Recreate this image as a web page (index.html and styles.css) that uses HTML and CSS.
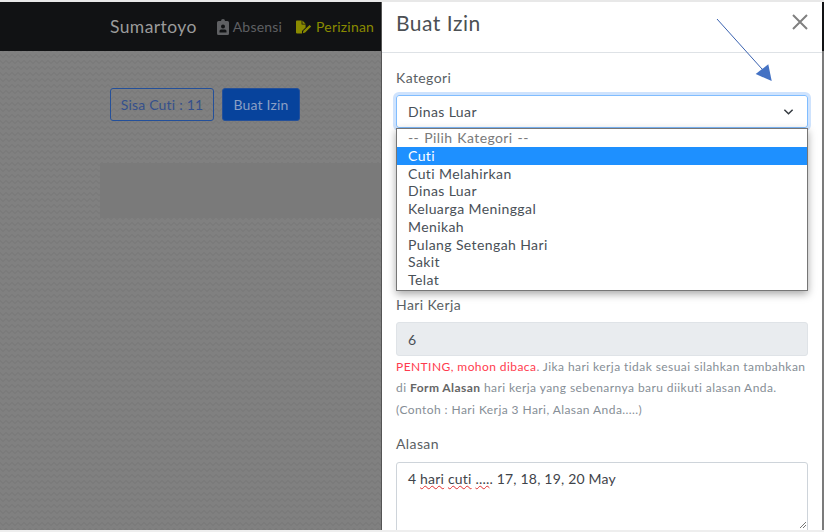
FILE: index.html
```html
<!DOCTYPE html>
<html>
<head>
  <meta charset="UTF-8">
  <title>Buat Izin</title>
  <link rel="stylesheet" href="styles.css">
</head>
<body>
  <div class="page">
    <nav class="navbar">
      <span class="brand">Sumartoyo</span>
      <span class="nav-link">
        <svg class="nav-icon" viewBox="0 0 12 16"><path fill="#5f6063" d="M1.500 2H4a2 2 0 0 1 4 0h2.500A1.500 1.500 0 0 1 12 3.500V14.500A1.500 1.500 0 0 1 10.500 16H1.500A1.500 1.500 0 0 1 0 14.500V3.500A1.500 1.500 0 0 1 1.500 2ZM6 5.500A2 2 0 1 0 6 9.500A2 2 0 1 0 6 5.500ZM2.500 13.500H9.500V12A1.500 1.500 0 0 0 8 10.500H4A1.500 1.500 0 0 0 2.500 12Z"/></svg>
        Absensi
      </span>
      <span class="nav-link active">
        <svg class="nav-icon wide" viewBox="0 0 20 16"><path fill="#8a8a00" d="M0 1A1 1 0 0 1 1 0H7V4.500A.5.5 0 0 0 7.500 5H12V8.500L7.500 13V16H1A1 1 0 0 1 0 15ZM8 0 12 4H8ZM17 5.500 19 7.500 11.500 15 8.500 15.800 9.300 12.800Z"/></svg>
        Perizinan
      </span>
    </nav>
    <div class="content">
      <div class="actions">
        <span class="btn btn-outline">Sisa Cuti : 11</span>
        <span class="btn btn-solid">Buat Izin</span>
      </div>
      <div class="empty-card"></div>
    </div>
  </div>

  <aside class="modal">
    <header class="modal-header">
      <h5>Buat Izin</h5>
      <svg class="close" viewBox="0 0 16 16"><path d="M1 1 15 15M15 1 1 15"/></svg>
    </header>
    <form class="modal-body">
      <label class="field-label">Kategori</label>
      <div class="select">
        <span>Dinas Luar</span>
        <svg class="chevron" viewBox="0 0 12 8"><path d="M1.500 1.500 6 6 10.500 1.500"/></svg>
      </div>
      <label class="field-label kerja">Hari Kerja</label>
      <div class="input-disabled">6</div>
      <p class="help">
        <span class="warn">PENTING, mohon dibaca</span>. Jika hari kerja tidak sesuai silahkan tambahkan<br>
        di <b>Form Alasan</b> hari kerja yang sebenarnya baru diikuti alasan Anda.<br>
        (Contoh : Hari Kerja 3 Hari, Alasan Anda.....)
      </p>
      <label class="field-label alasan">Alasan</label>
      <div class="textarea">
        4 <u>hari</u> <u>cuti</u> <u>....</u>. 17, 18, 19, 20 May
        <svg class="grip" viewBox="0 0 6 6"><path d="M0 6 6 0M3 6 6 3"/></svg>
      </div>

      <ul class="options">
        <li class="placeholder">-- Pilih Kategori --</li>
        <li class="selected">Cuti</li>
        <li>Cuti Melahirkan</li>
        <li>Dinas Luar</li>
        <li>Keluarga Meninggal</li>
        <li>Menikah</li>
        <li>Pulang Setengah Hari</li>
        <li>Sakit</li>
        <li>Telat</li>
      </ul>
    </form>
  </aside>
  <div class="edge"></div>

  <svg class="arrow" viewBox="0 0 70 80">
    <path class="arrow-line" d="M1 1 46 51"/>
    <path class="arrow-head" d="M39.700 56 55.700 63 52.300 46.300Z"/>
  </svg>
</body>
</html>
```

FILE: styles.css
```css
* {
  box-sizing: border-box;
}
html, body {
  height: 100%;
}
body {
  margin: 0;
  overflow: hidden;
  font-family: "Lato", sans-serif;
  font-size: 14px;
  letter-spacing: .4px;
  color: #495057;
  background: #eee;
  display: flex;
  border-top: 2px solid #e8e8e8;
  border-bottom: 2px solid #eee;
  position: relative;
}
.page {
  width: 381px;
  flex: none;
  overflow: hidden;
  background:
    linear-gradient(135deg, #7b7b7b 25%, transparent 25%) -3px 0 / 6px 6px,
    linear-gradient(225deg, #7b7b7b 25%, transparent 25%) -3px 0 / 6px 6px,
    linear-gradient(315deg, #7b7b7b 25%, transparent 25%) 0 0 / 6px 6px,
    linear-gradient(45deg, #7b7b7b 25%, transparent 25%) 0 0 / 6px 6px,
    #808080;
}
.navbar {
  height: 49px;
  background: #111214;
  display: flex;
  align-items: center;
  padding-left: 110px;
  white-space: nowrap;
}
.brand {
  font-size: 17.500px;
  color: #9b9b9b;
  margin-right: 20px;
}
.nav-link {
  color: #5f6063;
  letter-spacing: .2px;
  display: flex;
  align-items: center;
  gap: 4px;
  margin-right: 14px;
}
.nav-link.active {
  color: #8a8a00;
}
.nav-icon {
  width: 12px;
  height: 16px;
}
.nav-icon.wide {
  width: 16px;
  height: 14px;
}
.content {
  padding: 37px 0 0 100px;
}
.actions {
  display: flex;
  gap: 8px;
  padding-left: 10px;
}
.btn {
  height: 33px;
  width: 104px;
  display: flex;
  align-items: center;
  justify-content: center;
  letter-spacing: .2px;
  border-radius: 3px;
  border: 1px solid #24509a;
  color: #35508c;
}
.btn-solid {
  width: 78px;
  background: #07439c;
  color: #8a9fc4;
}
.empty-card {
  margin-top: 42px;
  height: 55px;
  background: #7a7a7a;
}

.modal {
  flex: none;
  width: 441px;
  background: #fff;
  border-left: 1px solid #555;
  position: relative;
}
.modal-header {
  height: 51px;
  border-bottom: 1px solid #dee2e6;
  display: flex;
  align-items: center;
  justify-content: space-between;
  padding: 0 14px 10px 14px;
}
.modal-header h5 {
  margin: 0;
  font-size: 21px;
  font-weight: 400;
  letter-spacing: .5px;
  color: #4c5054;
}
.close {
  width: 16px;
  height: 16px;
}
.close path {
  stroke: #808080;
  stroke-width: 2;
  fill: none;
}
.modal-body {
  padding: 15px 14px 0 14px;
}
.field-label {
  display: block;
  color: #5a5f64;
  line-height: 20px;
}
.select {
  margin-top: 7px;
  height: 33px;
  border: 1px solid #80bdff;
  border-radius: 3px;
  box-shadow: 0 0 0 3px #cfe3fd;
  display: flex;
  align-items: center;
  justify-content: space-between;
  padding: 0 13px 0 11px;
}
.chevron {
  width: 11px;
  height: 8px;
}
.chevron path {
  stroke: #343a40;
  stroke-width: 1.6;
  fill: none;
}
.kerja {
  margin-top: 167px;
}
.input-disabled {
  margin-top: 7px;
  height: 34px;
  background: #e9ecef;
  border: 1px solid #dfe3e7;
  border-radius: 3px;
  display: flex;
  align-items: center;
  padding-left: 11px;
}
.help {
  margin: 0;
  font-size: 12px;
  line-height: 21.300px;
  letter-spacing: .43px;
  color: #868e96;
  white-space: nowrap;
}
.warn {
  color: #ff3b4e;
}
.help b {
  color: #666;
}
.alasan {
  margin-top: 14px;
}
.textarea {
  margin-top: 8px;
  height: 90px;
  border: 1px solid #ced4da;
  border-radius: 3px;
  padding: 6px 11px;
  line-height: 20px;
  letter-spacing: .2px;
  color: #3f444a;
  position: relative;
}
.textarea u {
  text-decoration: underline wavy #e03030 1px;
}
.grip {
  position: absolute;
  right: 1px;
  top: 59px;
  width: 6px;
  height: 6px;
}
.grip path {
  stroke: #777;
  stroke-width: 1;
  fill: none;
}

/* open dropdown list lies over the form */
.options {
  position: absolute;
  left: 14px;
  top: 126px;
  width: 412px;
  margin: 0;
  padding: 0 0 1px;
  list-style: none;
  background: #fff;
  border: 1px solid #767676;
  box-shadow: 0 3px 8px rgba(0, 0, 0, .35);
}
.options li {
  height: 17.750px;
  line-height: 17.750px;
  padding-left: 11px;
  color: #495057;
}
.options .placeholder {
  color: #7a7a7a;
  word-spacing: 1px;
}
.options .selected {
  background: #1e90ff;
  color: #fff;
}
.edge {
  width: 2px;
  flex: none;
  background: linear-gradient(#111214 0 49px, #7b7b7b 49px);
}
.arrow {
  position: absolute;
  left: 716px;
  top: 16px;
  width: 70px;
  height: 80px;
}
.arrow-line {
  stroke: #3a62b0;
  stroke-width: 1;
  fill: none;
}
.arrow-head {
  fill: #4472c4;
}
```
